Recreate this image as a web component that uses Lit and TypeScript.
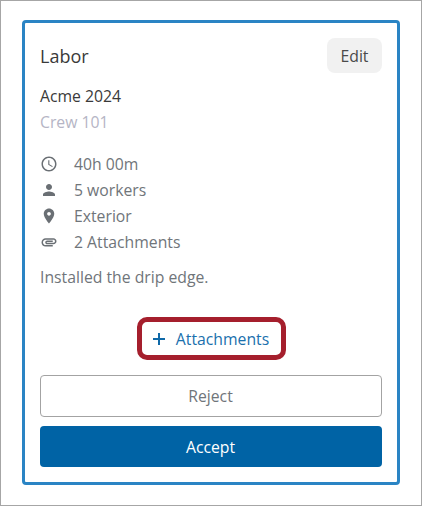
import { LitElement, html, css } from "lit";
import { customElement } from "lit/decorators.js";

@customElement("app-root")
export class AppRoot extends LitElement {
  static styles = css`
    :host {
      display: block;
      width: 422px;
      height: 506px;
      box-sizing: border-box;
      border: 1px solid #a6a6a6;
      padding: 19px 21px 20px;
      background: #fff;
      font-family: "Open Sans", sans-serif;
      color: #333;
    }
    .card {
      box-sizing: border-box;
      height: 465px;
      border: 3px solid #2a84c4;
      border-radius: 4px;
      padding: 15px;
      display: flex;
      flex-direction: column;
    }
    .head {
      display: flex;
      justify-content: space-between;
      align-items: center;
      height: 35px;
    }
    .title { font-size: 18px; color: #3a3a3a; }
    .edit {
      width: 55px;
      height: 35px;
      border-radius: 8px;
      background: #f1f1f1;
      display: flex;
      align-items: center;
      justify-content: center;
      font-size: 15.75px;
      color: #4a4a4a;
    }
    .acme { font-size: 15.75px; line-height: 26px; margin-top: 10px; color: #3a3a3a; }
    .crew { font-size: 15.75px; line-height: 26px; color: #b5b5c5; }
    .rows { margin-top: 16px; display: flex; flex-direction: column; }
    .row {
      display: flex;
      align-items: center;
      height: 26px;
      font-size: 15.75px;
      color: #70757a;
    }
    .ic { width: 34px; display: flex; flex: none; }
    .ic svg { width: 18px; height: 18px; display: block; fill: #6a6f74; }
    .desc { font-size: 15.75px; line-height: 24px; color: #70757a; margin-top: 10px; }
    .add-wrap { display: flex; justify-content: center; margin-top: 28px; }
    .add {
      box-sizing: border-box;
      width: 149px;
      height: 43px;
      border: 5px solid #a51f2d;
      border-radius: 10px;
      display: flex;
      align-items: center;
      justify-content: center;
      gap: 11px;
      color: #1a70ad;
      font-size: 15.75px;
    }
    .add svg { width: 12px; height: 12px; display: block; flex: none; }
    .btn {
      box-sizing: border-box;
      height: 42px;
      border-radius: 4px;
      padding-right: 1px;
      display: flex;
      align-items: center;
      justify-content: center;
      font-size: 15.75px;
    }
    .reject { margin-top: 15px; border: 1px solid #a3a3a3; color: #70757a; }
    .accept { margin-top: 9px; height: 41px; background: #0063a5; color: #fff; }
  `;

  render() {
    return html`
      <div class="card">
        <div class="head">
          <span class="title">Labor</span>
          <span class="edit">Edit</span>
        </div>
        <div class="acme">Acme 2024</div>
        <div class="crew">Crew 101</div>
        <div class="rows">
          <div class="row">
            <span class="ic"><svg viewBox="0 0 24 24"><path d="M11.990 2C6.470 2 2 6.480 2 12s4.470 10 9.990 10C17.520 22 22 17.520 22 12S17.520 2 11.990 2zM12 20c-4.420 0-8-3.580-8-8s3.580-8 8-8 8 3.580 8 8-3.580 8-8 8zm.5-13H11v6l5.250 3.150.75-1.230-4.500-2.670z"/></svg></span>40h 00m
          </div>
          <div class="row">
            <span class="ic"><svg viewBox="0 0 24 24"><path d="M12 12c2.210 0 4-1.790 4-4s-1.790-4-4-4-4 1.790-4 4 1.790 4 4 4zm0 2c-2.670 0-8 1.340-8 4v2h16v-2c0-2.660-5.330-4-8-4z"/></svg></span>5 workers
          </div>
          <div class="row">
            <span class="ic"><svg viewBox="0 0 24 24"><path d="M12 2C8.130 2 5 5.130 5 9c0 5.250 7 13 7 13s7-7.750 7-13c0-3.870-3.130-7-7-7zm0 9.500c-1.380 0-2.500-1.120-2.500-2.500s1.120-2.500 2.500-2.500 2.500 1.120 2.500 2.500-1.120 2.500-2.500 2.500z"/></svg></span>Exterior
          </div>
          <div class="row">
            <span class="ic"><svg viewBox="0 0 24 24"><path d="M2 12.500C2 9.460 4.460 7 7.500 7H18c2.210 0 4 1.790 4 4s-1.790 4-4 4H9.500C8.120 15 7 13.880 7 12.500S8.120 10 9.500 10H17v2H9.410c-.55 0-.55 1 0 1H18c1.100 0 2-.9 2-2s-.9-2-2-2H7.500C5.570 9 4 10.570 4 12.500S5.570 16 7.500 16H17v2H7.500C4.460 18 2 15.540 2 12.500z"/></svg></span>2 Attachments
          </div>
        </div>
        <div class="desc">Installed the drip edge.</div>
        <div class="add-wrap">
          <div class="add">
            <svg viewBox="0 0 12 12" fill="none" stroke="#0f69a8" stroke-width="2"><path d="M6 0v12M0 6h12"/></svg>
            Attachments
          </div>
        </div>
        <div class="btn reject">Reject</div>
        <div class="btn accept">Accept</div>
      </div>
    `;
  }
}
